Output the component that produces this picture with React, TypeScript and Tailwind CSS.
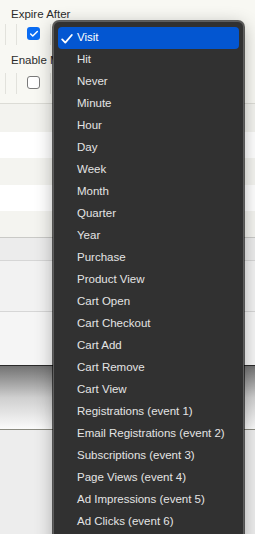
import { Check } from 'lucide-react'

const options = [
  'Visit',
  'Hit',
  'Never',
  'Minute',
  'Hour',
  'Day',
  'Week',
  'Month',
  'Quarter',
  'Year',
  'Purchase',
  'Product View',
  'Cart Open',
  'Cart Checkout',
  'Cart Add',
  'Cart Remove',
  'Cart View',
  'Registrations (event 1)',
  'Email Registrations (event 2)',
  'Subscriptions (event 3)',
  'Page Views (event 4)',
  'Ad Impressions (event 5)',
  'Ad Clicks (event 6)',
]

function CellRow({ checked }: { checked: boolean }) {
  return (
    <div className="flex h-[21px]">
      <div className="w-[5px]" />
      <div className="w-[11px] border-l border-[#e2e2dc]" />
      <div className="w-[34px] border-l border-[#e2e2dc] pl-[10px] pt-[3px]">
        {checked ? (
          <div className="flex h-[13px] w-[13px] items-center justify-center rounded-[3px] bg-[#0b6cf2]">
            <Check className="h-[10px] w-[10px] text-white" strokeWidth={3.5} />
          </div>
        ) : (
          <div className="h-[13px] w-[13px] rounded-[3px] border border-[#7a7a7a] bg-white" />
        )}
      </div>
      <div className="flex-1 border-l border-[#e2e2dc]" />
    </div>
  )
}

export default function App() {
  return (
    <div
      className="relative h-[534px] w-[255px] overflow-hidden bg-[#ededed] text-[11.5px]"
      style={{ fontFamily: '"Liberation Sans", Arial, sans-serif' }}
    >
      {/* settings panel behind the open select */}
      <div className="h-[104px] border-b border-[#dcdcd6] bg-[#f8f8f3] text-[#2b2b2b]">
        <div className="pl-[11px] pt-[7px] leading-[14px]">Expire After</div>
        <div className="mt-[3px]">
          <CellRow checked />
        </div>
        <div className="mt-[8px] w-[53px] overflow-hidden whitespace-nowrap pl-[11px] leading-[14px]">
          Enable M
        </div>
        <div className="mt-[6px]">
          <CellRow checked={false} />
        </div>
      </div>
      <div className="h-[28px] bg-[#f3f3ef]" />
      <div className="h-[26px] bg-white" />
      <div className="h-[27px] bg-[#f4f4f0]" />
      <div className="h-[26px] bg-white" />
      <div className="h-[27px] border-b border-[#c9c9c6] bg-[#f4f4f0]" />
      <div className="h-[23px] border-b border-[#d6d6d6] bg-[#ececec]" />
      <div className="h-[51px] border-b border-[#d6d6d6] bg-[#f2f2f2]" />
      <div className="h-[54px] border-b border-[#2a2a2a] bg-[#f5f5f5]" />
      <div className="h-[64px] border-b border-[#8a8a80] bg-gradient-to-b from-[#737373] via-[#cfcfcf] to-[#fbfbfb]" />
      <div className="h-[110px] bg-[#ededed]" />

      {/* open dropdown menu */}
      <div className="absolute left-[53px] top-[21px] w-[191px] rounded-[6px] border border-[#5e5e5e] bg-[#313131] px-[4px] pb-[30px] pt-[5px] shadow-[0_4px_18px_rgba(0,0,0,0.3),0_0_0_1px_rgba(0,0,0,0.6)]">
        {options.map((o, i) => (
          <div
            key={o}
            className={`relative flex h-[22px] items-center rounded-[4px] pl-[19px] ${
              i === 0 ? 'bg-[#0356d1] text-white' : 'text-[#e4e4e4]'
            }`}
          >
            {i === 0 && (
              <svg
                className="absolute left-[3px] top-[7px]"
                width="12"
                height="10"
                viewBox="0 0 12 10"
                fill="none"
              >
                <path d="M1.2 5.4 L4.3 8.6 L10.8 1" stroke="white" strokeWidth="1.8" strokeLinecap="round" strokeLinejoin="round" />
              </svg>
            )}
            {o}
          </div>
        ))}
      </div>
    </div>
  )
}
